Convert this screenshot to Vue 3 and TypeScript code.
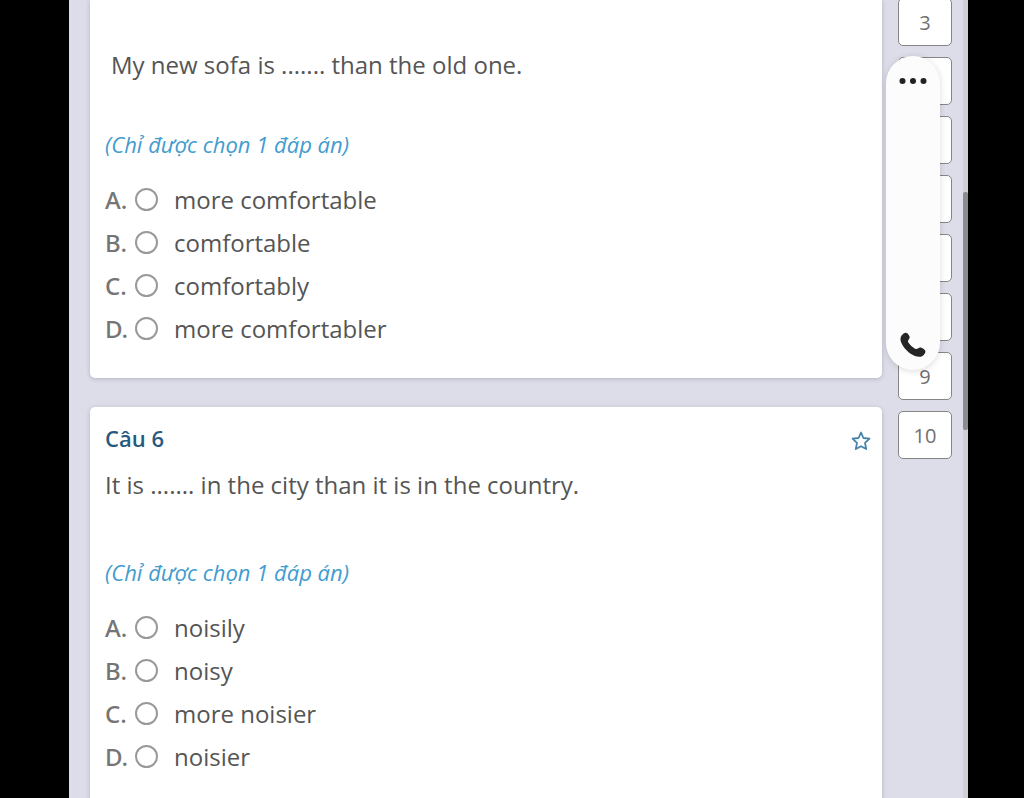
<script setup lang="ts">
import { ref } from 'vue'

interface Question {
  id: number
  title: string
  text: string
  indented: boolean
  options: string[]
}

const letters = ['A', 'B', 'C', 'D']

const questions: Question[] = [
  {
    id: 5,
    title: '',
    text: 'My new sofa is ....... than the old one.',
    indented: true,
    options: ['more comfortable', 'comfortable', 'comfortably', 'more comfortabler'],
  },
  {
    id: 6,
    title: 'Câu 6',
    text: 'It is ....... in the city than it is in the country.',
    indented: false,
    options: ['noisily', 'noisy', 'more noisier', 'noisier'],
  },
]

const pages = [3, 4, 5, 6, 7, 8, 9, 10]
const answers = ref<Record<number, string>>({})
</script>

<template>
  <div class="screen">
    <div class="page">
      <main class="questions">
        <section
          v-for="q in questions"
          :key="q.id"
          class="card"
          :class="{ continued: q.indented }"
        >
          <header v-if="q.title" class="card-head">
            <h2>{{ q.title }}</h2>
            <button class="star" type="button" aria-label="Đánh dấu">
              <svg viewBox="0 0 20 20" width="20" height="20">
                <path
                  d="M10 1.500 12.400 7l6.100.700-4.500 4.100 1.200 6.200L10 15.200l-5.200 2.800L6 11.800 1.500 7.700 7.600 7z"
                  fill="none"
                  stroke="#4583ab"
                  stroke-width="1.8"
                  stroke-linejoin="round"
                />
              </svg>
            </button>
          </header>
          <p class="text">{{ q.text }}</p>
          <p class="hint">(Chỉ được chọn 1 đáp án)</p>
          <ul class="options">
            <li v-for="(option, i) in q.options" :key="option">
              <label>
                <span class="letter">{{ letters[i] }}.</span>
                <input v-model="answers[q.id]" type="radio" :name="`q${q.id}`" :value="letters[i]" />
                <span>{{ option }}</span>
              </label>
            </li>
          </ul>
        </section>
      </main>

      <nav class="pages">
        <button v-for="n in pages" :key="n" type="button">{{ n }}</button>
        <div class="call-bar">
          <button type="button" aria-label="Menu">
            <svg viewBox="0 0 28 8" width="28" height="8" fill="#222">
              <circle cx="3.500" cy="4" r="3" />
              <circle cx="14" cy="4" r="3" />
              <circle cx="24.500" cy="4" r="3" />
            </svg>
          </button>
          <button type="button" aria-label="Call">
            <svg viewBox="0 0 26 26" width="26" height="26">
              <path
                d="M1.600 3.600C2.800 1.900 4.600.6 6 .7c1.600.2 3.600 2.900 3.700 4.500.1 1.600-2 2.700-1.700 4.300.4 2.100 5.900 7.300 8.100 7.600 1.600.2 2.600-1.600 4.200-1.500 1.700.1 4.800 2 5.100 3.600.3 1.600-1.300 3.600-2.900 4.700-2.500 1.700-6.500 1-10.500-1.300C7.400 19.900 3.200 15.400 1.200 10.600.1 7.900.3 5.400 1.600 3.600z"
                fill="#252525"
              />
            </svg>
          </button>
        </div>
      </nav>

      <div class="scrollbar"><div class="thumb"></div></div>
    </div>
  </div>
</template>

<style>
body {
  margin: 0;
  background: #000;
}
</style>

<style scoped>
.screen {
  box-sizing: border-box;
  height: 100vh;
  overflow: hidden;
  padding: 0 56px 0 69px;
  background: #000;
  color: #555;
  font-family: "Open Sans", "Noto Sans", sans-serif;
  font-size: 24px;
}
.page {
  display: flex;
  height: 100%;
  background: #dcdde8;
}
.questions {
  flex: 1;
  min-width: 0;
  padding-left: 21px;
  display: flex;
  flex-direction: column;
  gap: 29px;
}
.card {
  flex: none;
  padding: 15px 15px 28px;
  background: #fff;
  border-radius: 5px;
  box-shadow: 0 1px 4px rgba(60, 60, 90, 0.25);
}
.continued {
  padding-top: 47px;
  border-radius: 0 0 5px 5px;
}
.card-head {
  display: flex;
  align-items: center;
  justify-content: space-between;
  height: 32px;
  margin-bottom: 13px;
}
h2 {
  margin: 0;
  font-size: 22px;
  line-height: 32px;
  font-weight: 600;
  color: #285a80;
}
button {
  font: inherit;
  color: inherit;
  padding: 0;
  border: 0;
  background: none;
}
.star {
  display: flex;
  align-self: flex-end;
  padding-bottom: 3px;
  margin-right: -4px;
}
.text {
  margin: 0 0 53px;
  line-height: 36px;
}
.continued .text {
  margin-bottom: 45px;
  padding-left: 6px;
}
.hint {
  margin: 0 0 18px;
  font-size: 22px;
  line-height: 32px;
  font-style: italic;
  color: #429cd0;
}
.options {
  margin: 0;
  padding: 0;
  list-style: none;
}
label {
  display: flex;
  align-items: center;
  height: 43px;
}
.letter {
  width: 30px;
  font-family: "Noto Sans", sans-serif;
  font-weight: 500;
  line-height: 32px;
  color: #757575;
}
input {
  appearance: none;
  box-sizing: border-box;
  width: 23px;
  height: 23px;
  margin: 0 16px 0 0;
  border: 2px solid #999;
  border-radius: 50%;
  background: #fff;
}
input:checked {
  background: #429cd0;
  box-shadow: inset 0 0 0 3px #fff;
}
.pages {
  position: relative;
  width: 54px;
  margin: -2px 11px 0 16px;
  display: flex;
  flex-direction: column;
  gap: 11px;
}
.pages > button {
  flex: none;
  box-sizing: border-box;
  height: 48px;
  border: 1px solid #858585;
  border-radius: 5px;
  background: #fff;
  font-size: 20px;
  color: #707070;
}
.call-bar {
  position: absolute;
  top: 58px;
  left: -12px;
  box-sizing: border-box;
  width: 54px;
  height: 314px;
  padding: 21px 0 12px;
  display: flex;
  flex-direction: column;
  align-items: center;
  justify-content: space-between;
  border-radius: 27px;
  background: #fcfcfc;
  box-shadow: 0 1px 6px rgba(0, 0, 0, 0.15);
}
.call-bar button {
  display: flex;
}
.scrollbar {
  width: 5px;
  background: #d0d0d6;
}
.thumb {
  height: 238px;
  margin-top: 192px;
  border-radius: 2px;
  background: #8b8b92;
}
</style>
